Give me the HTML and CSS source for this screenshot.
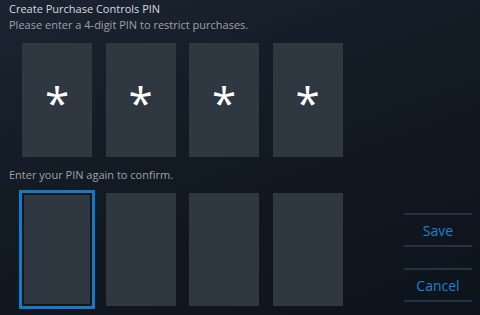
FILE: index.html
```html
<!DOCTYPE html>
<html>
<head>
<meta charset="utf-8">
<link rel="stylesheet" href="styles.css">
</head>
<body>
<div class="page">
  <div class="title">Create Purchase Controls PIN</div>
  <div class="subtitle">Please enter a 4-digit PIN to restrict purchases.</div>
  <div class="pin-row first">
    <div class="pin"><span class="star">*</span></div>
    <div class="pin"><span class="star">*</span></div>
    <div class="pin"><span class="star">*</span></div>
    <div class="pin"><span class="star">*</span></div>
  </div>
  <div class="label">Enter your PIN again to confirm.</div>
  <div class="bottom">
    <div class="pin-row second">
      <div class="pin focused"></div>
      <div class="pin"></div>
      <div class="pin"></div>
      <div class="pin"></div>
    </div>
    <div class="actions">
      <div class="btn">Save</div>
      <div class="btn">Cancel</div>
    </div>
  </div>
</div>
</body>
</html>
```
FILE: styles.css
```css
html, body {
  margin: 0;
  padding: 0;
}
body {
  width: 480px;
  height: 315px;
  overflow: hidden;
  background: linear-gradient(160deg, #1b2430 0%, #121a24 45%, #0d131b 100%);
  font-family: "Open Sans", "Noto Sans", sans-serif;
}
.page {
  padding: 1px 0 0 9px;
}
.title {
  font-size: 11px;
  line-height: 16px;
  color: #d5dae0;
}
.subtitle {
  font-size: 11px;
  line-height: 16px;
  color: #9ba3ad;
}
.pin-row {
  display: flex;
  gap: 13.5px;
  padding-left: 13px;
}
.pin-row.first {
  margin-top: 10px;
}
.pin {
  width: 70px;
  height: 114px;
  background: #2f3741;
  box-sizing: border-box;
  display: flex;
  align-items: center;
  justify-content: center;
}
.second .pin {
  height: 113px;
}
.star {
  color: #ffffff;
  font-size: 44px;
  line-height: 1;
  margin-top: 4px;
  font-family: "Open Sans", sans-serif;
}
.pin.focused {
  border: 2px solid #10161e;
  outline: 3px solid #1679c4;
}
.label {
  font-size: 11px;
  line-height: 16px;
  color: #9ba3ad;
  margin-top: 9.5px;
}
.bottom {
  display: flex;
  margin-top: 10.5px;
}
.actions {
  margin-left: auto;
  margin-right: 8px;
  width: 68px;
  padding-top: 20px;
  display: flex;
  flex-direction: column;
  gap: 21px;
}
.btn {
  height: 34px;
  box-sizing: border-box;
  border-top: 2px solid #233247;
  border-bottom: 2px solid #233247;
  display: flex;
  align-items: center;
  justify-content: center;
  color: #1f82cc;
  font-size: 14px;
}
```
